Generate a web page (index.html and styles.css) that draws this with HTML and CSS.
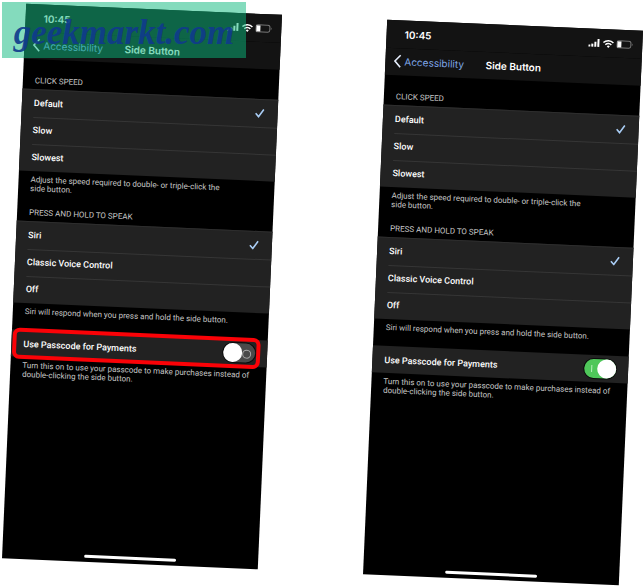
FILE: index.html
```html
<!DOCTYPE html>
<html lang="en">
<head>
  <meta charset="UTF-8" />
  <meta name="viewport" content="width=device-width, initial-scale=1.0" />
  <title>Side Button - Accessibility</title>
  <link rel="stylesheet" href="styles.css">
</head>
<body>
  <svg class="sprite" aria-hidden="true">
    <symbol id="signal" viewBox="0 0 12 9">
      <path d="M0 6h2v2H0zM3 5h2v3H3zM6 3h2v5H6zM9 0h2v8H9z" />
    </symbol>
    <symbol id="wifi" viewBox="0 0 12 9">
      <path d="M1 3.4a7 7 0 0 1 10 0M3 5.5a4.2 4.2 0 0 1 6 0" fill="none" stroke="currentColor" stroke-width="1.5" />
      <path d="M4.5 7a2.1 2.1 0 0 1 3 0L6 8.7z" />
    </symbol>
    <symbol id="battery" viewBox="0 0 17 9">
      <rect x="0.5" y="1" width="14" height="7" rx="2" fill="none" stroke="#777" />
      <rect x="1" y="1.5" width="4" height="6" />
      <path d="M15.5 3.2c1 .4 1 2.2 0 2.6z" fill="#777" />
    </symbol>
    <symbol id="back" viewBox="0 0 8 14">
      <path d="M7 1L1.5 7L7 13" fill="none" stroke="currentColor" stroke-width="1.6" />
    </symbol>
    <symbol id="check" viewBox="0 0 10 10">
      <path d="M1 5.5L4 8.7L9 1.3" fill="none" stroke="currentColor" stroke-width="1.6" />
    </symbol>
  </svg>

  <div class="phones">
    <section class="phone">
      <div class="status-bar">
        <span class="time">10:45</span>
        <div class="status-icons">
          <svg width="12" height="9"><use href="#signal" /></svg>
          <svg width="12" height="9"><use href="#wifi" /></svg>
          <svg width="17" height="9"><use href="#battery" /></svg>
        </div>
      </div>
      <nav class="nav-bar">
        <a class="back" href="#"><svg width="8" height="14"><use href="#back" /></svg>Accessibility</a>
        <h1>Side Button</h1>
      </nav>
      <form class="settings">
        <h2>CLICK SPEED</h2>
        <div class="group">
          <label class="row"><span>Default</span><input type="radio" name="speed" checked><svg width="10" height="10"><use href="#check" /></svg></label>
          <label class="row"><span>Slow</span><input type="radio" name="speed"><svg width="10" height="10"><use href="#check" /></svg></label>
          <label class="row"><span>Slowest</span><input type="radio" name="speed"><svg width="10" height="10"><use href="#check" /></svg></label>
        </div>
        <p>Adjust the speed required to double- or triple-click the side&nbsp;button.</p>
        <h2>PRESS AND HOLD TO SPEAK</h2>
        <div class="group">
          <label class="row"><span>Siri</span><input type="radio" name="hold" checked><svg width="10" height="10"><use href="#check" /></svg></label>
          <label class="row"><span>Classic Voice Control</span><input type="radio" name="hold"><svg width="10" height="10"><use href="#check" /></svg></label>
          <label class="row"><span>Off</span><input type="radio" name="hold"><svg width="10" height="10"><use href="#check" /></svg></label>
        </div>
        <p>Siri will respond when you press and hold the side button.</p>
        <div class="group payments marked">
          <label class="row"><span>Use Passcode for Payments</span><input class="switch" type="checkbox" role="switch"></label>
        </div>
        <p>Turn this on to use your passcode to make purchases instead of double-clicking the side button.</p>
      </form>
      <div class="home-bar"></div>
    </section>

    <section class="phone lower">
      <div class="status-bar">
        <span class="time">10:45</span>
        <div class="status-icons">
          <svg width="12" height="9"><use href="#signal" /></svg>
          <svg width="12" height="9"><use href="#wifi" /></svg>
          <svg width="17" height="9"><use href="#battery" /></svg>
        </div>
      </div>
      <nav class="nav-bar">
        <a class="back" href="#"><svg width="8" height="14"><use href="#back" /></svg>Accessibility</a>
        <h1>Side Button</h1>
      </nav>
      <form class="settings">
        <h2>CLICK SPEED</h2>
        <div class="group">
          <label class="row"><span>Default</span><input type="radio" name="speed" checked><svg width="10" height="10"><use href="#check" /></svg></label>
          <label class="row"><span>Slow</span><input type="radio" name="speed"><svg width="10" height="10"><use href="#check" /></svg></label>
          <label class="row"><span>Slowest</span><input type="radio" name="speed"><svg width="10" height="10"><use href="#check" /></svg></label>
        </div>
        <p>Adjust the speed required to double- or triple-click the side&nbsp;button.</p>
        <h2>PRESS AND HOLD TO SPEAK</h2>
        <div class="group">
          <label class="row"><span>Siri</span><input type="radio" name="hold" checked><svg width="10" height="10"><use href="#check" /></svg></label>
          <label class="row"><span>Classic Voice Control</span><input type="radio" name="hold"><svg width="10" height="10"><use href="#check" /></svg></label>
          <label class="row"><span>Off</span><input type="radio" name="hold"><svg width="10" height="10"><use href="#check" /></svg></label>
        </div>
        <p>Siri will respond when you press and hold the side button.</p>
        <div class="group payments">
          <label class="row"><span>Use Passcode for Payments</span><input class="switch" type="checkbox" role="switch" checked></label>
        </div>
        <p>Turn this on to use your passcode to make purchases instead of double-clicking the side button.</p>
      </form>
      <div class="home-bar"></div>
    </section>
  </div>

  <div class="watermark">geekmarkt.com</div>
</body>
</html>
```

FILE: styles.css
```css
* {
  box-sizing: border-box;
  margin: 0;
  padding: 0;
}
body {
  min-height: 100vh;
  background: #fff;
  font-family: Roboto, "Liberation Sans", sans-serif;
  color: #fff;
  overflow: hidden;
}
.sprite {
  display: none;
}
svg {
  display: block;
  flex: none;
  fill: currentColor;
}
.phones {
  display: flex;
  align-items: flex-start;
  gap: 105px;
  padding: 9px 13px 7px 14px;
}
.phone {
  flex: 1;
  aspect-ratio: 256 / 555;
  display: flex;
  flex-direction: column;
  background: #000;
  transform: rotate(2.5deg);
}
.phone.lower {
  margin-top: 16px;
}

/* top bars */
.status-bar,
.nav-bar {
  background: #131313;
  font-family: Inter, "Liberation Sans", sans-serif;
  font-size: 10px;
}
.status-bar {
  display: flex;
  justify-content: space-between;
  align-items: center;
  height: 28px;
  padding: 0 9px 0 18px;
}
.time {
  font-weight: 600;
}
.status-icons {
  display: flex;
  gap: 2px;
}
.nav-bar {
  display: grid;
  grid-template-columns: 1fr auto 1fr;
  align-items: center;
  height: 27px;
  padding: 0 8px 2px;
}
.back {
  display: flex;
  align-items: center;
  gap: 3px;
  color: #7ea6e6;
  text-decoration: none;
}
.back svg {
  color: #e8f0ff;
}
h1 {
  font-size: 10px;
  font-weight: 600;
}

/* settings list */
.settings {
  flex: 1;
  padding-top: 3px;
}
h2 {
  padding: 14px 12px 4px;
  font-size: 8px;
  font-weight: 400;
  line-height: 9px;
  color: #c8c8c8;
}
.group {
  position: relative;
  background: #222;
  border-top: 1px solid #2e2e2e;
}
.row {
  display: flex;
  align-items: center;
  justify-content: space-between;
  position: relative;
  height: 27px;
  padding: 0 13px 2px 12px;
  font-size: 9px;
  font-weight: 500;
}
.row + .row::before {
  content: "";
  position: absolute;
  top: 0;
  left: 12px;
  right: 0;
  height: 1px;
  background: #363636;
}
.row input {
  appearance: none;
}
.row svg {
  color: #a9cdf5;
  visibility: hidden;
}
.row input:checked + svg {
  visibility: visible;
}
.settings p {
  padding: 4px 14px 1px 12px;
  font-size: 8px;
  line-height: 9px;
  color: #c8c8c8;
}
.payments {
  margin-top: 13px;
  border-top: 0;
}
.payments .row {
  padding: 0 12px;
}
.marked::after {
  content: "";
  position: absolute;
  inset: -2px 7px -2px 1px;
  border: 4px solid #fb0207;
  border-radius: 7px;
}

/* switch */
.row .switch {
  position: relative;
  width: 32px;
  height: 19px;
  border-radius: 10px;
  background: #4a4a4a;
  box-shadow: 0 0 0 1px #0a0a0a;
}
.switch::before {
  content: "";
  position: absolute;
  top: 0;
  left: 0;
  width: 19px;
  height: 19px;
  border-radius: 50%;
  background: #fff;
}
.switch::after {
  content: "";
  position: absolute;
  top: 6px;
  right: 4px;
  width: 7px;
  height: 7px;
  border: 1px solid #aaa;
  border-radius: 50%;
}
.switch:checked {
  background: #4fc75a;
}
.switch:checked::before {
  left: 13px;
}
.switch:checked::after {
  left: 7px;
  width: 1px;
  border-width: 0 0 0 1px;
  border-color: #b8f0bd;
  border-radius: 0;
}

.home-bar {
  width: 92px;
  height: 3px;
  margin: 0 auto 4px;
  border-radius: 2px;
  background: #fff;
}

.watermark {
  position: absolute;
  top: 2px;
  left: 2px;
  width: 244px;
  height: 56px;
  background: rgba(10, 184, 123, 0.5);
  color: rgba(16, 58, 140, 0.92);
  font: italic bold 35px/62px "Liberation Serif", serif;
  text-align: center;
}
```
